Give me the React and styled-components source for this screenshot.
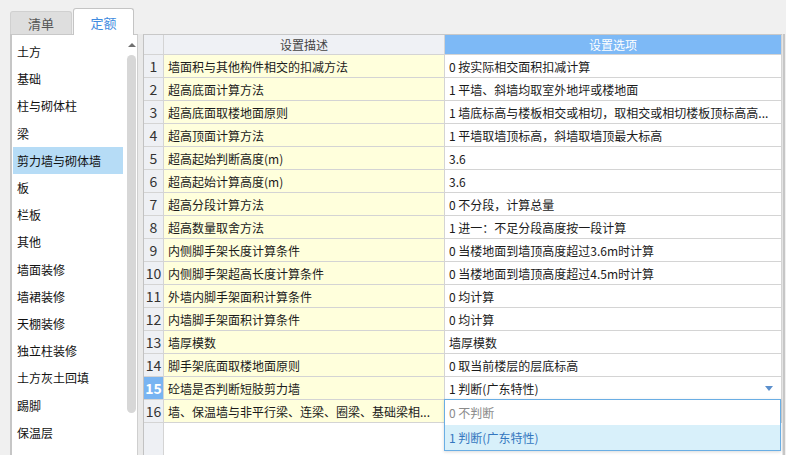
import styled, { createGlobalStyle } from 'styled-components'

const GlobalStyle = createGlobalStyle`
  body {
    margin: 0;
    background: #f0f0f0;
    font-family: "Noto Sans CJK SC", "Noto Sans", sans-serif;
    font-size: 12px;
    color: #222;
  }
  * { box-sizing: border-box; }
`;

const Page = styled.div`
  width: 786px;
  height: 455px;
  display: flex;
  flex-direction: column;
  overflow: hidden;
`;

const TabBar = styled.div`
  height: 34px;
  display: flex;
  align-items: flex-end;
  padding-left: 10px;
  gap: 1px;
`;

const Tab = styled.div`
  position: relative;
  width: ${p => (p.$active ? '61px' : '62px')};
  height: ${p => (p.$active ? '27px' : '23px')};
  margin-bottom: ${p => (p.$active ? '-1px' : '0')};
  z-index: ${p => (p.$active ? 2 : 1)};
  display: flex;
  align-items: center;
  justify-content: center;
  background: ${p => (p.$active ? '#ffffff' : '#dedede')};
  color: ${p => (p.$active ? '#3f8be0' : '#555')};
  border: 1px solid ${p => (p.$active ? '#c4c4c4' : '#d0d0d0')};
  border-bottom: none;
  border-radius: 3px 3px 0 0;
  font-size: 13px;
`;

const Body = styled.div`
  flex: 1;
  display: flex;
  min-height: 0;
`;

const Sidebar = styled.div`
  margin-left: 10px;
  width: 128px;
  display: flex;
  background: #fff;
  border-top: 1px solid #c8c8c8;
  border-left: 2px solid #c6c6c6;
  border-right: 1px solid #cfcfcf;
  padding: 3px 0 0 1px;
`;

const CategoryList = styled.div`
  width: 110px;
  display: flex;
  flex-direction: column;
`;

const Category = styled.div`
  height: 27.2px;
  flex: none;
  display: flex;
  align-items: center;
  padding-left: 4px;
  white-space: nowrap;
  color: #111;
  background: ${p => (p.$selected ? '#b6dcf6' : 'transparent')};
`;

const ScrollTrack = styled.div`
  margin-left: 4px;
  width: 9px;
  display: flex;
  flex-direction: column;
  align-items: center;
`;

const ScrollArrow = styled.div`
  margin-top: 5px;
  width: 0;
  height: 0;
  border-left: 4px solid transparent;
  border-right: 4px solid transparent;
  border-bottom: 4px solid #707070;
`;

const ScrollThumb = styled.div`
  margin-top: 8px;
  width: 9px;
  height: 358px;
  border-radius: 5px;
  background: #d7d7d7;
`;

const Splitter = styled.div`
  width: 5px;
  background: #e9e9e9;
`;

const Grid = styled.div`
  width: 639px;
  display: flex;
  flex-direction: column;
  background: #fff;
  border-top: 1px solid #c8c8c8;
  border-left: 1px solid #c2c2c2;
`;

const Row = styled.div`
  display: grid;
  grid-template-columns: 20px 281px 337px;
  height: ${p => (p.$header ? '20px' : '23px')};
  flex: none;
`;

const Cell = styled.div`
  position: relative;
  display: flex;
  align-items: center;
  padding: 0 4px;
  white-space: nowrap;
  overflow: ${p => (p.$open ? 'visible' : 'hidden')};
  border-right: 1px solid #d4d4d4;
  border-bottom: 1px solid #d4d4d4;
  background: ${p => p.$bg || '#fff'};
  color: ${p => p.$color || '#1a1a1a'};
  justify-content: ${p => (p.$center ? 'center' : 'flex-start')};
  font-weight: ${p => (p.$bold ? 'bold' : 'normal')};
`;

const NumCell = styled(Cell)`
  padding: 0;
  justify-content: center;
  font-size: 14px;
  color: ${p => (p.$active ? '#fff' : '#333')};
  background: ${p => (p.$active ? '#78b4f2' : '#eef0f4')};
  font-weight: ${p => (p.$active ? 'bold' : 'normal')};
`;

const Filler = styled.div`
  flex: 1;
  display: grid;
  grid-template-columns: 20px 1fr;
`;

const FillerNum = styled.div`
  background: #eef0f4;
  border-right: 1px solid #d4d4d4;
`;

const RightEdge = styled.div`
  width: 3px;
  background: #c6c6c6;
  border-left: 1px solid #e4e4e4;
`;

const SelectArrow = styled.span`
  margin-left: auto;
  margin-right: 4px;
  width: 0;
  height: 0;
  border-left: 4px solid transparent;
  border-right: 4px solid transparent;
  border-top: 5px solid #5b8fcc;
`;

const Popup = styled.div`
  position: absolute;
  top: 100%;
  left: -1px;
  right: 0;
  z-index: 5;
  background: #fff;
  border: 1px solid #6aaee4;
  box-shadow: 0 1px 3px rgba(0, 0, 0, 0.15);
`;

const PopupItem = styled.div`
  height: 25px;
  display: flex;
  align-items: center;
  padding-left: 4px;
  color: ${p => (p.$selected ? '#3477bf' : '#8a8a8a')};
  background: ${p => (p.$selected ? '#d8f0fa' : '#fff')};
`;

const categories = [
  '土方', '基础', '柱与砌体柱', '梁', '剪力墙与砌体墙', '板', '栏板', '其他',
  '墙面装修', '墙裙装修', '天棚装修', '独立柱装修', '土方灰土回填', '踢脚', '保温层',
];

// the option of row 16 lies under the open drop-down, so it stays empty
const rows = [
  ['墙面积与其他构件相交的扣减方法', '0 按实际相交面积扣减计算'],
  ['超高底面计算方法', '1 平墙、斜墙均取室外地坪或楼地面'],
  ['超高底面取楼地面原则', '1 墙底标高与楼板相交或相切，取相交或相切楼板顶标高高...'],
  ['超高顶面计算方法', '1 平墙取墙顶标高，斜墙取墙顶最大标高'],
  ['超高起始判断高度(m)', '3.6'],
  ['超高起始计算高度(m)', '3.6'],
  ['超高分段计算方法', '0 不分段，计算总量'],
  ['超高数量取舍方法', '1 进一：不足分段高度按一段计算'],
  ['内侧脚手架长度计算条件', '0 当楼地面到墙顶高度超过3.6m时计算'],
  ['内侧脚手架超高长度计算条件', '0 当楼地面到墙顶高度超过4.5m时计算'],
  ['外墙内脚手架面积计算条件', '0 均计算'],
  ['内墙脚手架面积计算条件', '0 均计算'],
  ['墙厚模数', '墙厚模数'],
  ['脚手架底面取楼地面原则', '0 取当前楼层的层底标高'],
  ['砼墙是否判断短肢剪力墙', '1 判断(广东特性)'],
  ['墙、保温墙与非平行梁、连梁、圈梁、基础梁相...', ''],
];

const YELLOW = '#ffffdc';

export default function App() {
  return (
    <Page>
      <GlobalStyle />
      <TabBar>
        <Tab>清单</Tab>
        <Tab $active>定额</Tab>
      </TabBar>
      <Body>
        <Sidebar>
          <CategoryList>
            {categories.map(c => (
              <Category key={c} $selected={c === '剪力墙与砌体墙'}>{c}</Category>
            ))}
          </CategoryList>
          <ScrollTrack>
            <ScrollArrow />
            <ScrollThumb />
          </ScrollTrack>
        </Sidebar>
        <Splitter />
        <Grid>
          <Row $header>
            <NumCell />
            <Cell $bg="#eff1f5" $color="#444" $center>设置描述</Cell>
            <Cell $bg="#7db9f6" $color="#fff" $center>设置选项</Cell>
          </Row>
          {rows.map(([desc, opt], i) => {
            const active = i === 14;
            return (
              <Row key={i}>
                <NumCell $active={active}>{i + 1}</NumCell>
                <Cell $bg={YELLOW}>{desc}</Cell>
                {active ? (
                  <Cell $open>
                    {opt}
                    <SelectArrow />
                    <Popup>
                      <PopupItem>0 不判断</PopupItem>
                      <PopupItem $selected>1 判断(广东特性)</PopupItem>
                    </Popup>
                  </Cell>
                ) : (
                  <Cell>{opt}</Cell>
                )}
              </Row>
            );
          })}
          <Filler>
            <FillerNum />
            <div />
          </Filler>
        </Grid>
        <RightEdge />
      </Body>
    </Page>
  );
}
